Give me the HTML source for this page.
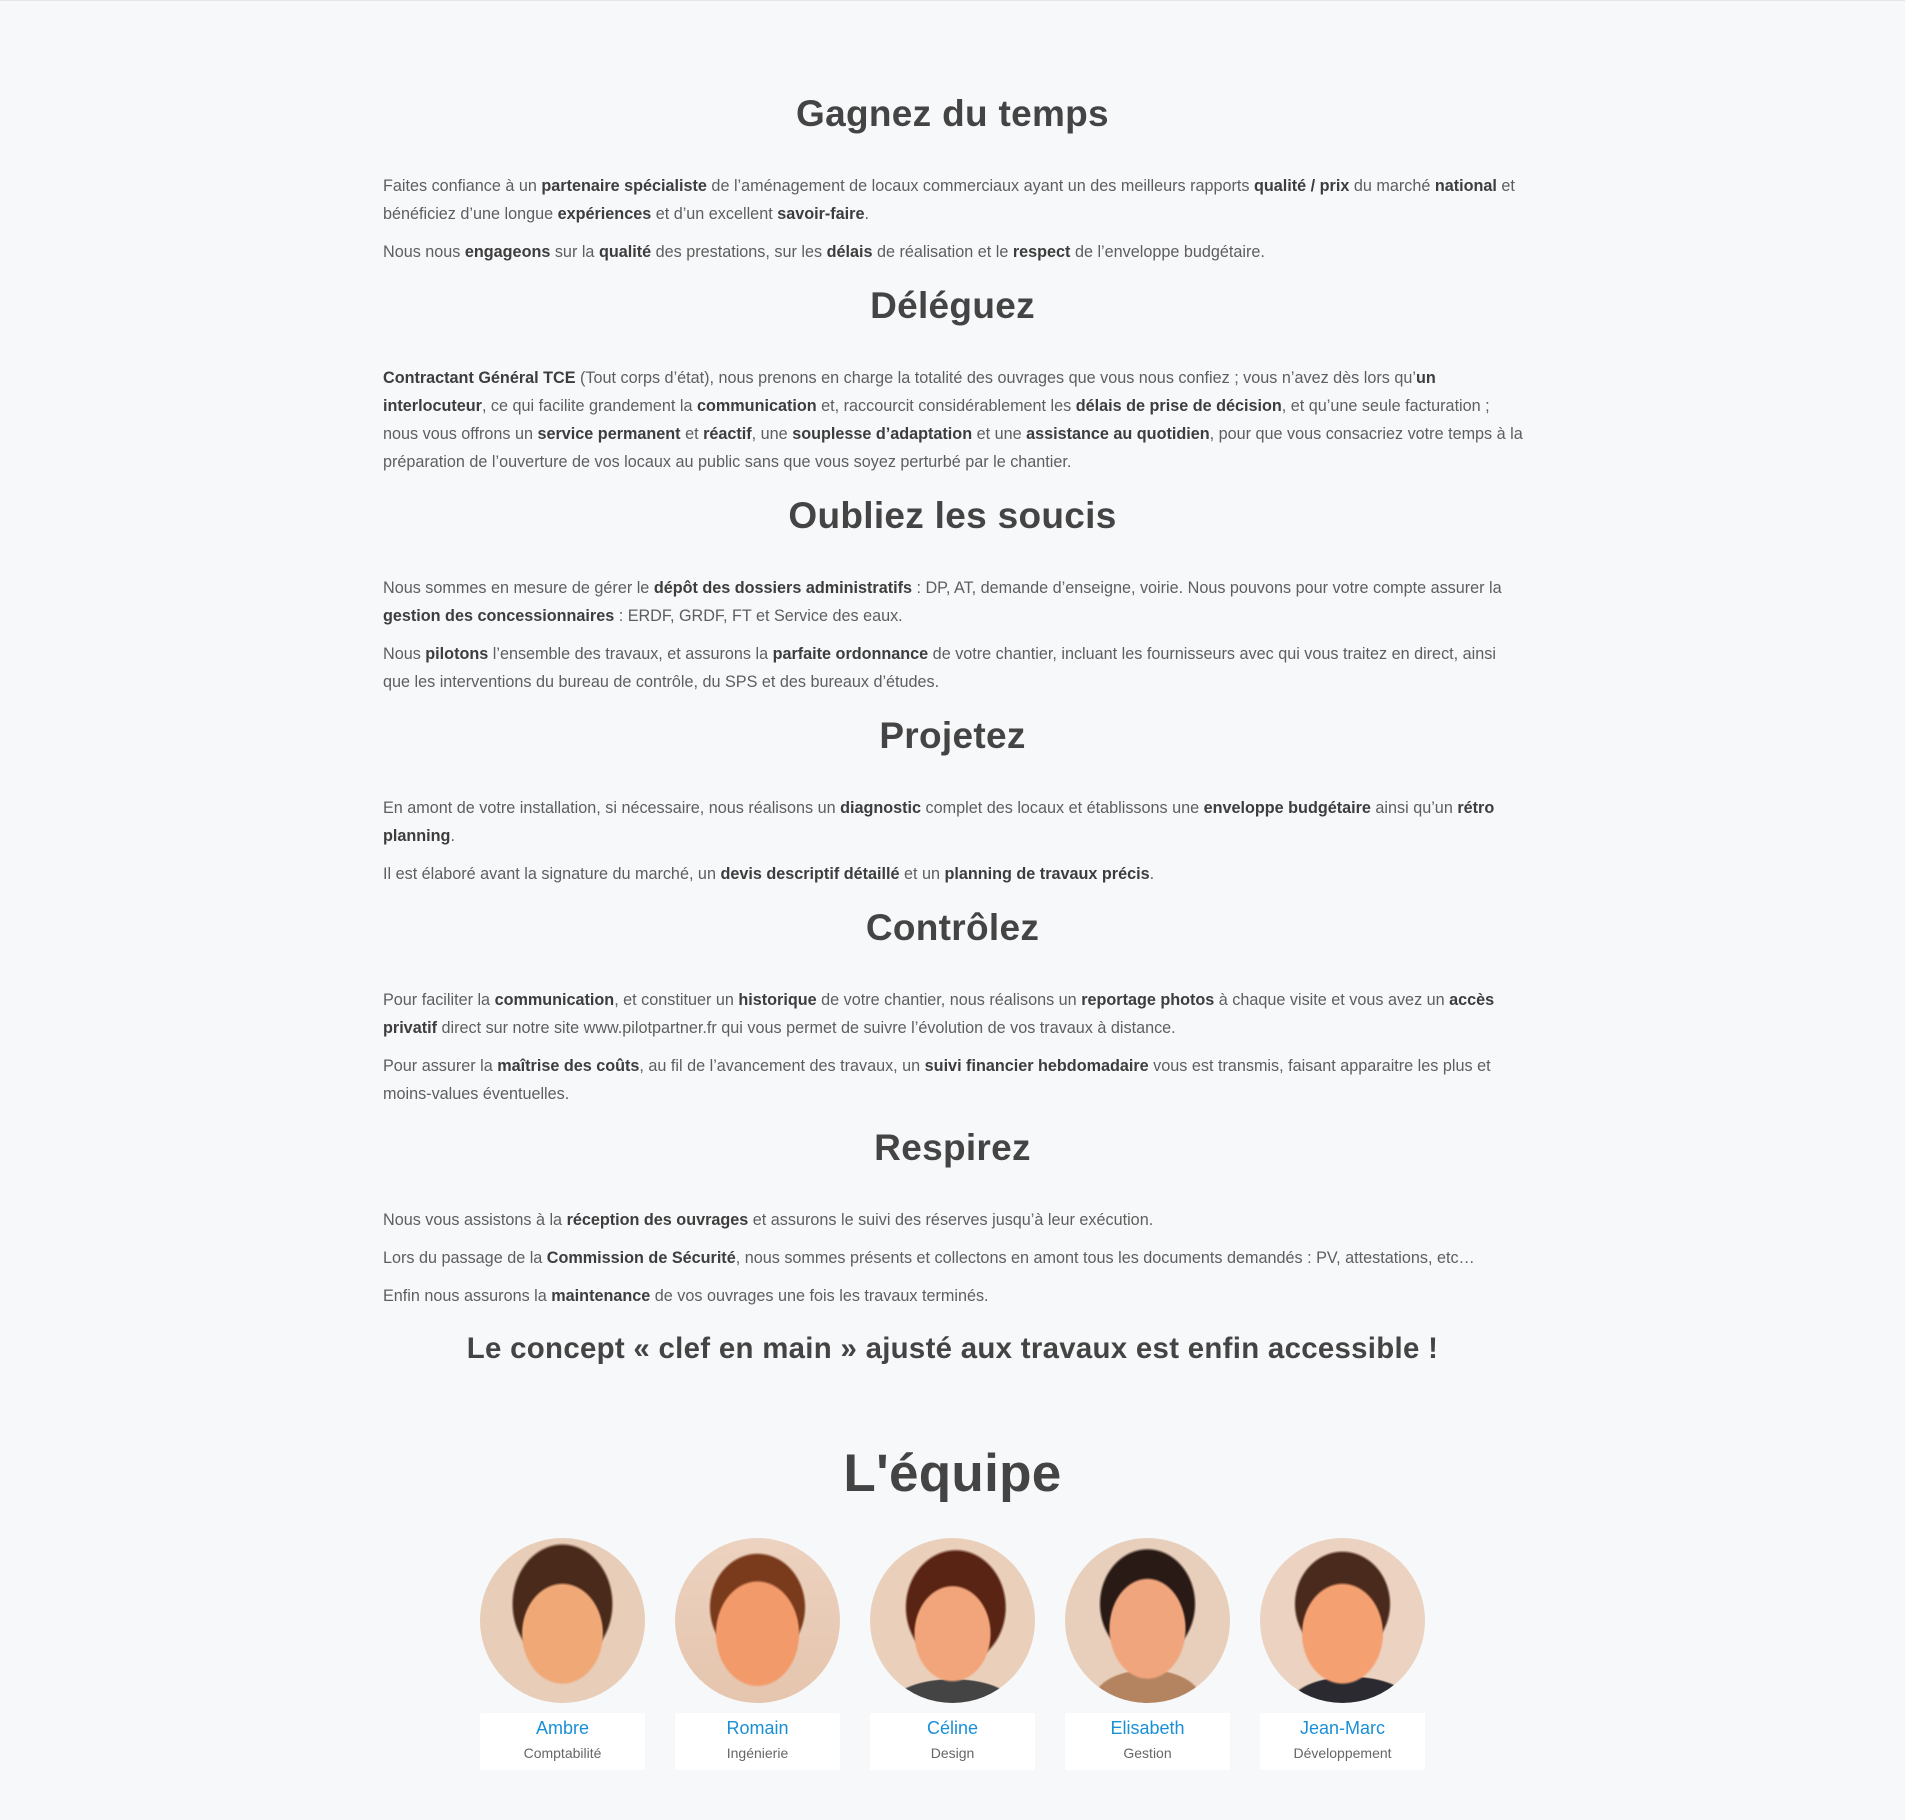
<!DOCTYPE html>
<html><head><meta charset="utf-8"><style>
*{margin:0;padding:0;box-sizing:border-box}
body{width:1905px;height:1820px;background:#f7f8fa;font-family:"Liberation Sans",sans-serif;color:#555;position:relative;overflow:hidden;border-top:1px solid #e4e6e9}
h2{position:absolute;left:0;width:1905px;text-align:center;font-size:37px;font-weight:bold;color:#444;line-height:44px;letter-spacing:0.3px}
p{position:absolute;left:383px;font-size:16.2px;line-height:28px;white-space:nowrap;color:#5e5e5e}
b{color:#3d3d3d}
.c{position:absolute;top:1537px;width:165px;height:165px;border-radius:50%;overflow:hidden}
.box{position:absolute;top:1712px;width:165px;height:57px;background:#fff;border-radius:2px;text-align:center}
.n{font-size:18px;color:#1a8fd6;margin-top:2px;line-height:26px}
.r{font-size:14px;color:#666;line-height:24px}
</style></head><body>
<h2 style="top:91px">Gagnez du temps</h2>
<p style="top:171px">Faites confiance à un <b>partenaire spécialiste</b> de l’aménagement de locaux commerciaux ayant un des meilleurs rapports <b>qualité / prix</b> du marché <b>national</b> et<br>bénéficiez d’une longue <b>expériences</b> et d’un excellent <b>savoir-faire</b>.</p>
<p style="top:237px">Nous nous <b>engageons</b> sur la <b>qualité</b> des prestations, sur les <b>délais</b> de réalisation et le <b>respect</b> de l’enveloppe budgétaire.</p>
<h2 style="top:283px">Déléguez</h2>
<p style="top:363px"><b>Contractant Général TCE</b> (Tout corps d’état), nous prenons en charge la totalité des ouvrages que vous nous confiez ; vous n’avez dès lors qu’<b>un</b><br><b>interlocuteur</b>, ce qui facilite grandement la <b>communication</b> et, raccourcit considérablement les <b>délais de prise de décision</b>, et qu’une seule facturation ;<br>nous vous offrons un <b>service permanent</b> et <b>réactif</b>, une <b>souplesse d’adaptation</b> et une <b>assistance au quotidien</b>, pour que vous consacriez votre temps à la<br>préparation de l’ouverture de vos locaux au public sans que vous soyez perturbé par le chantier.</p>
<h2 style="top:493px">Oubliez les soucis</h2>
<p style="top:573px">Nous sommes en mesure de gérer le <b>dépôt des dossiers administratifs</b> : DP, AT, demande d’enseigne, voirie. Nous pouvons pour votre compte assurer la<br><b>gestion des concessionnaires</b> : ERDF, GRDF, FT et Service des eaux.</p>
<p style="top:639px">Nous <b>pilotons</b> l’ensemble des travaux, et assurons la <b>parfaite ordonnance</b> de votre chantier, incluant les fournisseurs avec qui vous traitez en direct, ainsi<br>que les interventions du bureau de contrôle, du SPS et des bureaux d’études.</p>
<h2 style="top:713px">Projetez</h2>
<p style="top:793px">En amont de votre installation, si nécessaire, nous réalisons un <b>diagnostic</b> complet des locaux et établissons une <b>enveloppe budgétaire</b> ainsi qu’un <b>rétro</b><br><b>planning</b>.</p>
<p style="top:859px">Il est élaboré avant la signature du marché, un <b>devis descriptif détaillé</b> et un <b>planning de travaux précis</b>.</p>
<h2 style="top:905px">Contrôlez</h2>
<p style="top:985px">Pour faciliter la <b>communication</b>, et constituer un <b>historique</b> de votre chantier, nous réalisons un <b>reportage photos</b> à chaque visite et vous avez un <b>accès</b><br><b>privatif</b> direct sur notre site www.pilotpartner.fr qui vous permet de suivre l’évolution de vos travaux à distance.</p>
<p style="top:1051px">Pour assurer la <b>maîtrise des coûts</b>, au fil de l’avancement des travaux, un <b>suivi financier hebdomadaire</b> vous est transmis, faisant apparaitre les plus et<br>moins-values éventuelles.</p>
<h2 style="top:1125px">Respirez</h2>
<p style="top:1205px">Nous vous assistons à la <b>réception des ouvrages</b> et assurons le suivi des réserves jusqu’à leur exécution.</p>
<p style="top:1243px">Lors du passage de la <b>Commission de Sécurité</b>, nous sommes présents et collectons en amont tous les documents demandés : PV, attestations, etc…</p>
<p style="top:1281px">Enfin nous assurons la <b>maintenance</b> de vos ouvrages une fois les travaux terminés.</p>
<h2 style="top:1326px;font-size:29.4px">Le concept « clef en main » ajusté aux travaux est enfin accessible !</h2>
<h2 style="top:1442px;font-size:53px;line-height:62px">L'équipe</h2>

<div class="c" style="left:480px;background:radial-gradient(ellipse 34% 42% at 50% 58%,#f0a877 0 70%,transparent 74%),radial-gradient(ellipse 42% 50% at 50% 40%,#4a2a1a 0 70%,transparent 74%),#e8cdb8"></div>
<div class="c" style="left:675px;background:radial-gradient(ellipse 35% 44% at 50% 58%,#f29a6a 0 70%,transparent 74%),radial-gradient(ellipse 40% 45% at 50% 42%,#7a3a1c 0 70%,transparent 74%),linear-gradient(#ecd2c0,#e5c5ad)"></div>
<div class="c" style="left:870px;background:radial-gradient(ellipse 32% 40% at 50% 58%,#f2a57a 0 70%,transparent 74%),radial-gradient(ellipse 42% 48% at 52% 42%,#5a2414 0 70%,transparent 74%),radial-gradient(ellipse 50% 20% at 50% 100%,#444 0 70%,transparent 74%),#ead0bb"></div>
<div class="c" style="left:1065px;background:radial-gradient(ellipse 32% 42% at 50% 55%,#f0a57c 0 70%,transparent 74%),radial-gradient(ellipse 40% 46% at 50% 40%,#2a1a16 0 70%,transparent 74%),radial-gradient(ellipse 45% 25% at 50% 98%,#b48460 0 70%,transparent 74%),#e8cfbb"></div>
<div class="c" style="left:1260px;background:radial-gradient(ellipse 34% 42% at 50% 58%,#f5a070 0 70%,transparent 74%),radial-gradient(ellipse 40% 44% at 50% 40%,#4a2a1c 0 70%,transparent 74%),radial-gradient(ellipse 50% 22% at 55% 100%,#2a2a30 0 70%,transparent 74%),#ecd2c0"></div>

<div class="box" style="left:480px"><div class="n">Ambre</div><div class="r">Comptabilité</div></div>
<div class="box" style="left:675px"><div class="n">Romain</div><div class="r">Ingénierie</div></div>
<div class="box" style="left:870px"><div class="n">Céline</div><div class="r">Design</div></div>
<div class="box" style="left:1065px"><div class="n">Elisabeth</div><div class="r">Gestion</div></div>
<div class="box" style="left:1260px"><div class="n">Jean-Marc</div><div class="r">Développement</div></div>
</body></html>
